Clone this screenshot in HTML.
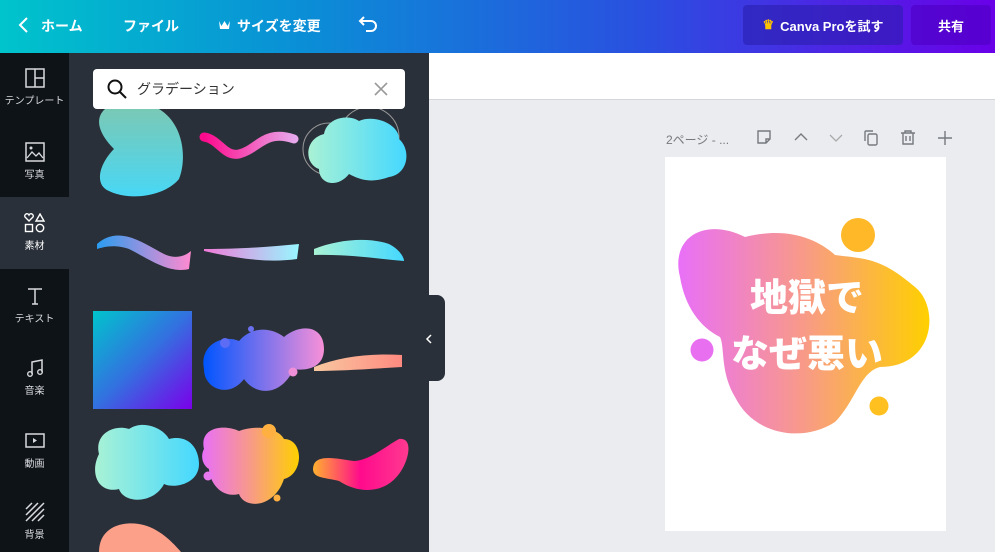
<!DOCTYPE html>
<html><head><meta charset="utf-8"><style>
*{margin:0;padding:0;box-sizing:border-box}
body{width:995px;height:552px;overflow:hidden;position:relative;font-family:"Liberation Sans","Noto Sans CJK JP",sans-serif;background:#ebecf0}
.a{position:absolute}
.top{left:0;top:0;width:995px;height:53px;background:linear-gradient(90deg,#00c4cc 0%,#0a8fd6 30%,#2a4fe0 65%,#6a00e8 100%)}
.tt{color:#fff;font-size:14px;font-weight:bold;top:16px}
.btn{top:5px;height:40px;border-radius:4px;color:#fff;font-size:13px;font-weight:bold;display:flex;align-items:center;justify-content:center}
.side{left:0;top:53px;width:69px;height:499px;background:#0e1318}
.si{left:0;width:69px;text-align:center;color:#d8dadd;font-size:10px}
.si svg{display:block;margin:0 auto 4px}
.panel{left:69px;top:53px;width:360px;height:499px;background:#293039}
.tb{color:#76797e;font-size:12px}
</style></head><body>
<div class="a top"></div>
<svg class="a" style="left:17px;top:16px" width="14" height="18"><path d="M10 2 L3 9 L10 16" stroke="#fff" stroke-width="2" fill="none"/></svg>
<div class="a tt" style="left:41px">ホーム</div>
<div class="a tt" style="left:123px">ファイル</div>
<svg class="a" style="left:218px;top:19px" width="13" height="11"><path d="M1 2 L3.5 7 L6.5 2 L9.5 7 L12 2 L11 10 H2Z" fill="#fff"/></svg>
<div class="a tt" style="left:237px">サイズを変更</div>
<svg class="a" style="left:358px;top:14px" width="22" height="20"><path d="M6 3 L2 7 L6 11 M2 7 H13 a5 5 0 0 1 0 10 H8" stroke="#fff" stroke-width="2" fill="none"/></svg>
<div class="a btn" style="left:743px;width:160px;background:rgba(40,30,170,.55)"><span style="color:#ffc400;margin-right:6px">♛</span>Canva Proを試す</div>
<div class="a btn" style="left:911px;width:80px;background:rgba(80,0,200,.7)">共有</div>

<div class="a side"></div>
<div class="a" style="left:0;top:197px;width:69px;height:72px;background:#293039"></div>
<div class="a si" style="top:68px"><svg width="20" height="20"><rect x="1" y="1" width="18" height="18" fill="none" stroke="#d8dadd" stroke-width="1.5"/><path d="M10 1V19M10 10H19" stroke="#d8dadd" stroke-width="1.5"/></svg>テンプレート</div>
<div class="a si" style="top:142px"><svg width="20" height="20"><rect x="1" y="1" width="18" height="18" fill="none" stroke="#d8dadd" stroke-width="1.5"/><path d="M2 16 L7 10 L11 14 L14 11 L18 16" stroke="#d8dadd" stroke-width="1.3" fill="none"/><circle cx="6" cy="6" r="1.5" fill="#d8dadd"/></svg>写真</div>
<div class="a si" style="top:213px;color:#fff"><svg width="22" height="20"><path d="M5 8 L1 4 a2.2 2.2 0 0 1 4-2 a2.2 2.2 0 0 1 4 2Z M16 1 L20 8 H12Z" fill="none" stroke="#fff" stroke-width="1.4"/><rect x="1.5" y="11.5" width="7" height="7" fill="none" stroke="#fff" stroke-width="1.4"/><circle cx="16" cy="15" r="3.7" fill="none" stroke="#fff" stroke-width="1.4"/></svg>素材</div>
<div class="a si" style="top:286px"><svg width="20" height="20"><path d="M3 3H17M10 3V18M7 18H13" stroke="#d8dadd" stroke-width="1.5"/></svg>テキスト</div>
<div class="a si" style="top:358px"><svg width="20" height="20"><path d="M7 16V4 L17 2 V14" stroke="#d8dadd" stroke-width="1.5" fill="none"/><circle cx="5" cy="16" r="2.3" fill="none" stroke="#d8dadd" stroke-width="1.4"/><circle cx="15" cy="14" r="2.3" fill="none" stroke="#d8dadd" stroke-width="1.4"/></svg>音楽</div>
<div class="a si" style="top:431px"><svg width="20" height="20"><rect x="1" y="3" width="18" height="13" fill="none" stroke="#d8dadd" stroke-width="1.5"/><path d="M8 7 L12 9.5 L8 12Z" fill="#d8dadd"/></svg>動画</div>
<div class="a si" style="top:502px"><svg width="20" height="20"><path d="M1 7L7 1M1 13L13 1M1 19L19 1M7 19L19 7M13 19L19 13" stroke="#d8dadd" stroke-width="1.5"/></svg>背景</div>

<div class="a panel"></div>
<div class="a" style="left:93px;top:69px;width:312px;height:40px;background:#fff;border-radius:4px"></div>
<svg class="a" style="left:106px;top:78px" width="22" height="22"><circle cx="9" cy="9" r="6.5" fill="none" stroke="#111" stroke-width="2"/><path d="M14 14 L20 20" stroke="#111" stroke-width="2"/></svg>
<div class="a" style="left:137px;top:79px;font-size:14px;color:#333">グラデーション</div>
<svg class="a" style="left:373px;top:81px" width="16" height="16"><path d="M2 2L14 14M14 2L2 14" stroke="#999" stroke-width="1.6"/></svg>

<svg class="a" style="left:69px;top:109px" width="360" height="443">
<defs>
<linearGradient id="g1" x1="0" y1="0" x2="0" y2="1"><stop offset="0" stop-color="#7ac9b6"/><stop offset="1" stop-color="#48d7f5"/></linearGradient>
<linearGradient id="g2" x1="0" y1="0" x2="1" y2="0"><stop offset="0" stop-color="#ff0a8c"/><stop offset="1" stop-color="#e7a7ea"/></linearGradient>
<linearGradient id="g3" x1="0" y1="0" x2="1" y2="0"><stop offset="0" stop-color="#a9f2d5"/><stop offset="1" stop-color="#45d8ff"/></linearGradient>
<linearGradient id="g4" x1="0" y1="0" x2="1" y2="0"><stop offset="0" stop-color="#2a9cf0"/><stop offset="1" stop-color="#ff8ad0"/></linearGradient>
<linearGradient id="g5" x1="0" y1="0" x2="1" y2="0"><stop offset="0" stop-color="#f07ad8"/><stop offset="1" stop-color="#98f6ff"/></linearGradient>
<linearGradient id="g6" x1="0" y1="0" x2="1" y2="1"><stop offset="0" stop-color="#00c4cc"/><stop offset=".5" stop-color="#3370e0"/><stop offset="1" stop-color="#7a00ea"/></linearGradient>
<linearGradient id="g7" x1="0" y1="0" x2="1" y2="0"><stop offset="0" stop-color="#0055ff"/><stop offset="1" stop-color="#f890d8"/></linearGradient>
<linearGradient id="g8" x1="0" y1="0" x2="1" y2="0"><stop offset="0" stop-color="#f8c8a0"/><stop offset="1" stop-color="#ff8a80"/></linearGradient>
<linearGradient id="g9" x1="0" y1="0" x2="1" y2="0"><stop offset="0" stop-color="#e870f8"/><stop offset=".5" stop-color="#f89a88"/><stop offset="1" stop-color="#ffd000"/></linearGradient>
<linearGradient id="g10" x1="0" y1="0" x2="1" y2="0"><stop offset="0" stop-color="#ffb030"/><stop offset=".5" stop-color="#ff0a8c"/><stop offset="1" stop-color="#ff3a90"/></linearGradient>
</defs>
<path d="M36 0 H90 C115 15 118 50 110 70 C95 88 60 92 40 82 C25 76 30 55 45 40 C30 25 25 10 36 0Z" fill="url(#g1)"/>
<path d="M135 28 C150 30 155 48 170 45 C190 40 195 20 225 30" stroke="url(#g2)" stroke-width="9" fill="none" stroke-linecap="round"/>
<circle cx="260" cy="40" r="26" fill="none" stroke="#999" stroke-width="1"/><circle cx="300" cy="28" r="30" fill="none" stroke="#999" stroke-width="1"/>
<path d="M255 25 C258 8 280 5 290 12 C305 5 330 15 330 30 C342 40 340 65 320 68 C300 75 290 70 280 65 C268 80 250 75 250 60 C235 55 235 30 255 25Z" fill="url(#g3)"/>
<path d="M28 135 C50 115 75 135 95 145 C105 150 115 148 122 142 L120 160 C100 165 80 150 60 140 C45 135 35 138 28 140Z" fill="url(#g4)"/>
<path d="M135 140 C170 140 200 138 230 135 L228 150 C200 154 170 150 135 142Z" fill="url(#g5)"/>
<path d="M245 140 C270 130 300 128 320 135 C330 140 335 148 335 152 C310 150 280 145 245 146Z" fill="url(#g3)"/>
<rect x="24" y="202" width="99" height="98" fill="url(#g6)"/>
<path d="M135 260 C130 235 155 225 170 232 C185 215 205 220 215 228 C230 215 255 215 255 240 C255 260 235 262 225 260 C210 290 185 285 175 270 C160 290 135 280 135 260Z" fill="url(#g7)"/>
<circle cx="156" cy="234" r="5" fill="#5c6cf5"/><circle cx="182" cy="220" r="3" fill="#6a70f0"/><circle cx="224" cy="263" r="4.5" fill="#f090d8"/>
<path d="M245 258 C270 248 300 244 333 246 L333 258 C300 260 270 262 245 262Z" fill="url(#g8)"/>
<path d="M30 345 C25 325 45 315 60 320 C75 310 95 320 100 330 C120 325 130 340 130 355 C130 375 105 380 95 375 C85 395 55 395 50 380 C30 385 20 365 30 345Z" fill="url(#g3)"/>
<path d="M135 340 C130 318 155 315 170 322 C190 315 210 320 215 330 C235 330 235 365 215 370 C205 400 175 400 170 385 C150 390 140 370 140 360 C132 355 132 345 135 340Z" fill="url(#g9)"/>
<circle cx="200" cy="322" r="7" fill="#ffb040"/><circle cx="139" cy="367" r="4.5" fill="#e878f0"/><circle cx="208" cy="389" r="3.5" fill="#ffb040"/>
<path d="M245 355 C250 345 270 350 285 352 C300 352 320 335 330 330 C345 328 340 352 330 365 C315 385 290 385 270 372 C255 368 240 370 245 355Z" fill="url(#g10)"/>
<path d="M30 443 C30 420 50 412 70 415 C90 418 105 435 112 443Z" fill="#fda08a"/>
</svg>
<div class="a" style="left:429px;top:295px;width:16px;height:86px;background:#293039;border-radius:0 8px 8px 0"></div>
<svg class="a" style="left:425px;top:333px" width="8" height="12"><path d="M6 2L2 6L6 10" stroke="#fff" stroke-width="1.5" fill="none"/></svg>

<div class="a" style="left:429px;top:53px;width:566px;height:47px;background:#fff;border-bottom:1px solid #d5d6da"></div>
<div class="a tb" style="left:666px;top:131px">2ページ - ...</div>
<svg class="a" style="left:755px;top:128px" width="200" height="20">
<path d="M3 3H15V11L11 15H3Z M11 15V11H15" fill="none" stroke="#76797e" stroke-width="1.4"/>
<path d="M40 12L46 6L52 12" fill="none" stroke="#76797e" stroke-width="1.4"/>
<path d="M75 7L81 13L87 7" fill="none" stroke="#aaa" stroke-width="1.3"/>
<rect x="113" y="6" width="9" height="11" rx="1.5" fill="none" stroke="#76797e" stroke-width="1.4"/><path d="M110 13V4a1 1 0 0 1 1-1H118" fill="none" stroke="#76797e" stroke-width="1.4"/>
<path d="M146 5H160M150 5V3H156V5M148 5V16H158V5M151 8V13M155 8V13" fill="none" stroke="#76797e" stroke-width="1.4"/>
<path d="M190 3V17M183 10H197" stroke="#76797e" stroke-width="1.4"/>
</svg>
<div class="a" style="left:665px;top:157px;width:281px;height:374px;background:#fff"></div>
<svg class="a" style="left:665px;top:157px" width="281" height="374">
<defs><linearGradient id="gm" x1="0" y1="0" x2="1" y2="0"><stop offset="0" stop-color="#e870f8"/><stop offset=".5" stop-color="#f89a88"/><stop offset="1" stop-color="#ffd000"/></linearGradient></defs>
<path d="M15 120 C5 80 40 60 80 80 C120 70 150 80 170 98 C200 102 215 100 250 130 C275 150 270 210 215 210 C195 215 190 245 170 265 C140 285 90 280 70 240 C55 215 60 190 55 180 C35 170 20 150 15 120Z" fill="url(#gm)"/>
<circle cx="193" cy="78" r="17" fill="#ffb828"/><circle cx="37" cy="193" r="11.5" fill="#e870f0"/><circle cx="214" cy="249" r="9.5" fill="#ffc020"/>
<text x="142" y="154" text-anchor="middle" font-family="Noto Sans CJK JP,sans-serif" font-weight="900" font-size="38" fill="#fff">地獄で</text>
<text x="142" y="210" text-anchor="middle" font-family="Noto Sans CJK JP,sans-serif" font-weight="900" font-size="38" fill="#fff">なぜ悪い</text>
</svg>
</body></html>
